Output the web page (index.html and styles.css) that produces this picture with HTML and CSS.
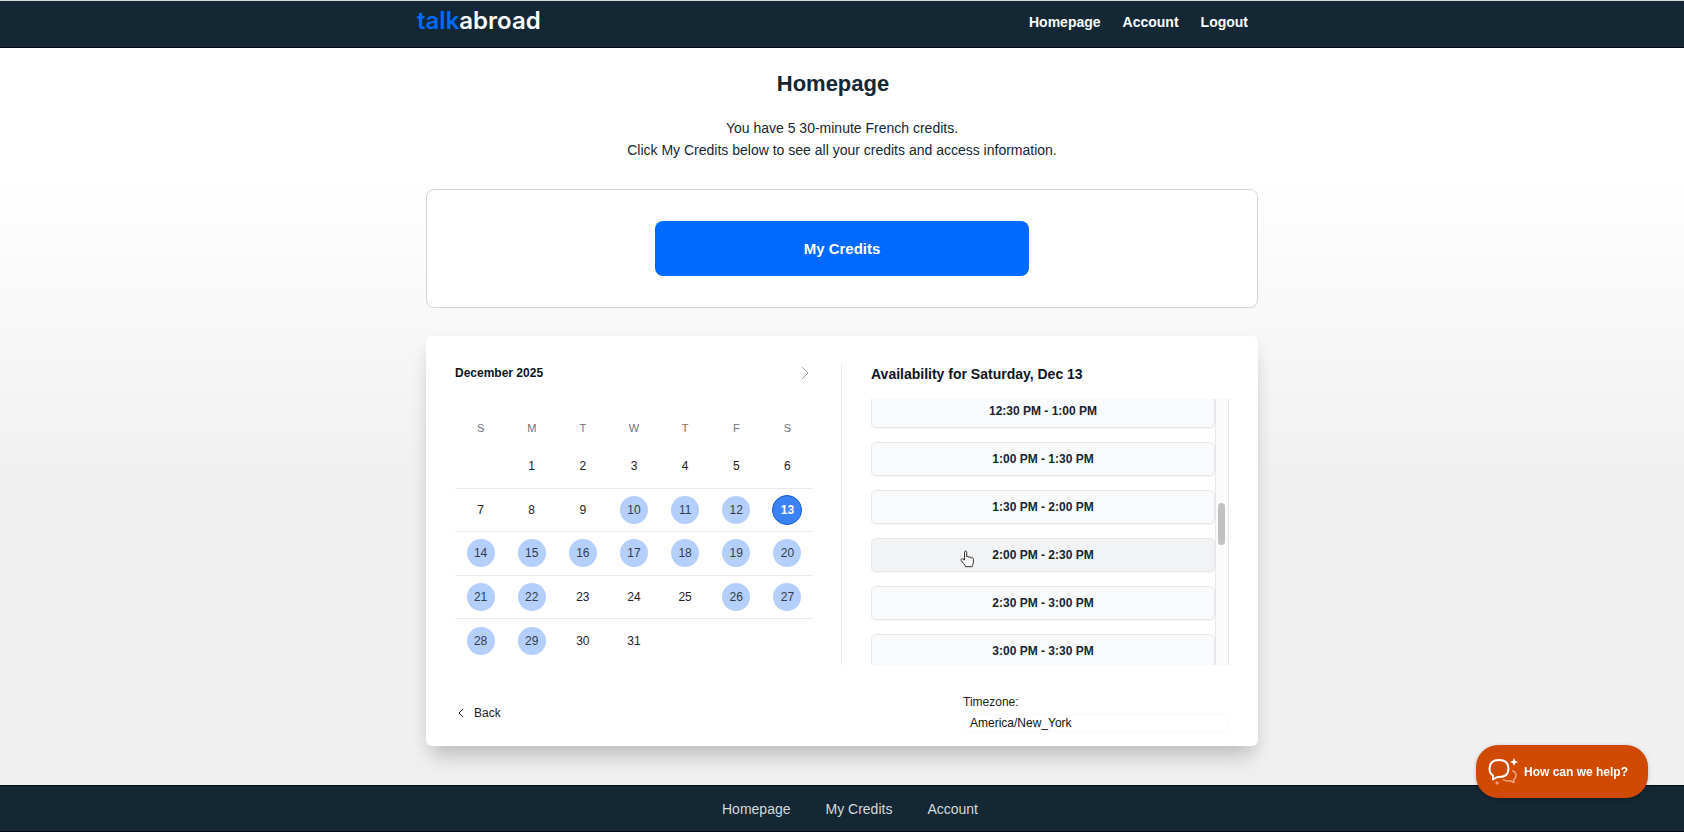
FILE: index.html
```html
<!DOCTYPE html>
<html lang="en">
<head>
    <meta charset="UTF-8">
    <meta name="viewport" content="width=device-width, initial-scale=1.0">
    <title>TalkAbroad - Homepage</title>
    <link rel="stylesheet" href="styles.css">
</head>
<body>
    <header class="site-header">
        <div class="header-inner">
            <a class="logo" href="#"><span>talk</span>abroad</a>
            <nav class="main-nav">
                <a href="#">Homepage</a>
                <a href="#">Account</a>
                <a href="#">Logout</a>
            </nav>
        </div>
    </header>

    <main>
        <h1>Homepage</h1>
        <p class="intro">You have 5 30-minute French credits.<br>Click My Credits below to see all your credits and access information.</p>

        <div class="credits-box">
            <button class="credits-btn">My Credits</button>
        </div>

        <section class="scheduler">
            <div class="panels">
                <div class="calendar">
                    <div class="month">
                        <h2>December 2025</h2>
                        <button class="next-btn" aria-label="Next month">
                            <svg width="8" height="14" viewBox="0 0 8 14"><path d="M1 1l6 6-6 6"/></svg>
                        </button>
                    </div>
                    <table>
                        <thead>
                            <tr><th>S</th><th>M</th><th>T</th><th>W</th><th>T</th><th>F</th><th>S</th></tr>
                        </thead>
                        <tbody id="days"></tbody>
                    </table>
                </div>
                <div class="availability">
                    <h2>Availability for Saturday, Dec 13</h2>
                    <div class="slots-wrap">
                        <div class="slots" id="slots">
                            <button class="slot">12:30 PM - 1:00 PM</button>
                            <button class="slot">1:00 PM - 1:30 PM</button>
                            <button class="slot">1:30 PM - 2:00 PM</button>
                            <button class="slot active">
                                2:00 PM - 2:30 PM
                                <svg class="pointer" width="15" height="18" viewBox="0 0 15 18"><path d="M4.500 10V2.200c0-1.600 2.200-1.600 2.200 0V7c.3-1 2.200-.9 2.300.5.500-.9 2.100-.6 2.200.7.600-.8 2.200-.4 2.200 1v3c0 1.500-1 2.300-1.200 4.500H5.500C5 14.500 2.500 12.500 1.200 10.500c-.8-1.300.8-2.300 1.800-1.500z"/></svg>
                            </button>
                            <button class="slot">2:30 PM - 3:00 PM</button>
                            <button class="slot">3:00 PM - 3:30 PM</button>
                        </div>
                        <div class="scrollbar"><div class="thumb"></div></div>
                    </div>
                </div>
            </div>

            <div class="card-footer">
                <button class="back-btn">
                    <svg width="6" height="10" viewBox="0 0 6 10"><path d="M5 1L1 5l4 4"/></svg>
                    Back
                </button>
                <div class="timezone">
                    <label for="timezone">Timezone:</label>
                    <select id="timezone">
                        <option>America/New_York</option>
                    </select>
                </div>
            </div>
        </section>
    </main>

    <footer class="site-footer">
        <nav>
            <a href="#">Homepage</a>
            <a href="#">My Credits</a>
            <a href="#">Account</a>
        </nav>
    </footer>

    <button class="help-btn">
        <svg width="30" height="28" viewBox="0 0 30 28">
            <path class="bubble" d="M5 21.500V17.500C2.500 16 1.500 13.500 1.500 10.500 1.500 5 4.500 2 11 2s9.500 3 9.500 8.500S17.500 19 11 19c-1 0-1.500 0-2 .2z"/>
            <path class="bubble-back" d="M24 12.500c3 1 4 3 4 5 0 1.800-.8 3-2.200 4v3l-2.800-1.700c-3 .5-6 .2-8-1.300"/>
            <path class="spark" d="M26 0l1.200 2.800L30 4l-2.800 1.200L26 8l-1.200-2.800L22 4l2.800-1.200z"/>
            <path class="spark small" d="M9 22.500l.8 1.700 1.700.8-1.700.8L9 27.500l-.8-1.700-1.700-.8 1.700-.8z"/>
        </svg>
        How can we help?
    </button>

    <script>
        const available = [10, 11, 12, 13, 14, 15, 16, 17, 18, 19, 20, 21, 22, 26, 27, 28, 29];
        const selected = 13;
        const firstWeekday = 1;
        const daysInMonth = 31;

        function renderDays() {
            let html = '';
            for (let week = 0; week < 5; week++) {
                html += '<tr>';
                for (let i = 0; i < 7; i++) {
                    const day = week * 7 + i - firstWeekday + 1;
                    if (day < 1 || day > daysInMonth) {
                        html += '<td></td>';
                        continue;
                    }
                    let cls = 'day';
                    if (available.includes(day)) cls += ' available';
                    if (day === selected) cls += ' selected';
                    html += `<td><button class="${cls}">${day}</button></td>`;
                }
                html += '</tr>';
            }
            document.getElementById('days').innerHTML = html;
        }

        renderDays();
        document.getElementById('slots').scrollTop = 5;
    </script>
</body>
</html>
```
FILE: styles.css
```css
* {
    box-sizing: border-box;
}
body {
    margin: 0;
    font-family: "Liberation Sans", Arial, sans-serif;
    font-size: 14px;
    color: #132734;
    background: linear-gradient(#fff 180px, #f0f0f0 480px);
}
a {
    text-decoration: none;
}
button {
    font-family: inherit;
    padding: 0;
    border: none;
    background: none;
    cursor: pointer;
}
svg path {
    fill: none;
    stroke: currentColor;
}
h1, h2, p {
    margin: 0;
}
.site-header {
    height: 48px;
    background: #132734;
    border-top: 1px solid #d5dcdc;
    border-bottom: 1px solid #020814;
}
.header-inner {
    display: flex;
    justify-content: space-between;
    max-width: 850px;
    margin: 0 auto;
    padding-right: 19px;
}
.logo {
    font-family: Inter, sans-serif;
    font-size: 24px;
    font-weight: 600;
    line-height: 40px;
    color: #fff;
}
.logo span {
    color: #006aff;
}
.main-nav {
    display: flex;
    gap: 22px;
    line-height: 42px;
    font-weight: bold;
}
.main-nav a {
    color: #fff;
}
main {
    max-width: 832px;
    margin: 0 auto;
    padding: 21px 0 39px;
}
h1 {
    padding-right: 18px;
    font-size: 22px;
    line-height: 30px;
    text-align: center;
}
.intro {
    margin-top: 18px;
    line-height: 22px;
    text-align: center;
}
.credits-box {
    margin-top: 28px;
    padding: 31px;
    border: 1px solid #d5d5d5;
    border-radius: 8px;
    background: #fff;
}
.credits-btn {
    display: block;
    width: 374px;
    max-width: 100%;
    height: 55px;
    margin: 0 auto;
    border-radius: 8px;
    background: #006aff;
    color: #fff;
    font-size: 15px;
    font-weight: bold;
}
.scheduler {
    margin-top: 28px;
    padding: 28px 29px 14px;
    border-radius: 6px;
    background: #fff;
    box-shadow: 0 16px 20px -6px rgba(0, 0, 0, 0.18), 0 6px 16px rgba(0, 0, 0, 0.05);
}
.panels {
    display: grid;
    grid-template-columns: 1fr 1fr;
}
.calendar {
    padding-right: 28px;
    border-right: 1px solid #e8eaed;
}
.month {
    display: flex;
    justify-content: space-between;
    align-items: center;
    height: 18px;
    padding-right: 4px;
}
.month h2 {
    font-size: 12px;
    color: #0b1526;
}
.next-btn {
    height: 14px;
    color: #9ca3af;
}
.next-btn svg {
    display: block;
}
table {
    width: 100%;
    height: 244px;
    margin-top: 36px;
    border-collapse: collapse;
    table-layout: fixed;
}
th {
    height: 27px;
    padding: 0 0 8px;
    font-size: 11px;
    font-weight: normal;
    color: #6b7280;
}
td {
    height: 43px;
    padding: 0;
    text-align: center;
}
tbody tr + tr {
    border-top: 1px solid #e8eaed;
}
.day {
    width: 28px;
    height: 28px;
    border-radius: 50%;
    font-size: 12px;
    color: #222;
}
.day.available {
    background: #b5cffc;
    color: #333c4d;
}
.day.selected {
    width: 30px;
    height: 30px;
    border: 1px solid #0f5bd0;
    background: #3b82f6;
    color: #fff;
    font-weight: bold;
}
.availability {
    padding-left: 29px;
}
.availability h2 {
    font-size: 14px;
    line-height: 20px;
    color: #0b1526;
}
.slots-wrap {
    display: flex;
    height: 266px;
    margin-top: 15px;
}
.slots {
    flex: 1;
    overflow-y: auto;
    scrollbar-width: none;
}
.scrollbar {
    width: 14px;
    padding: 104px 3px 0 2px;
    background: #fafafa;
    border-left: 1px solid #e8e8e8;
    border-right: 1px solid #e8e8e8;
}
.thumb {
    height: 42px;
    border-radius: 4px;
    background: #c1c1c1;
}
.slot {
    position: relative;
    display: block;
    width: 100%;
    height: 34px;
    margin-bottom: 14px;
    border: 1px solid #e5e7eb;
    border-radius: 5px;
    background: #f9fafb;
    box-shadow: 0 1px 2px rgba(0, 0, 0, 0.05);
    font-size: 12px;
    font-weight: bold;
    color: #1a2433;
}
.slot.active {
    background: #f2f3f5;
}
.pointer {
    position: absolute;
    top: 11px;
    left: 88px;
}
.pointer path {
    fill: #fff;
    stroke: #333;
}
.card-footer {
    display: flex;
    justify-content: space-between;
    align-items: center;
    margin-top: 29px;
    font-size: 12px;
    color: #222;
}
.back-btn {
    display: flex;
    align-items: center;
    gap: 10px;
    padding-left: 3px;
    font-size: 12px;
    color: #222;
}
.timezone {
    width: 266px;
}
.timezone label {
    display: block;
    line-height: 16px;
}
.timezone select {
    width: 100%;
    height: 18px;
    margin-top: 4px;
    padding: 0 6px;
    border: 1px solid #f8f8f8;
    border-radius: 5px;
    appearance: none;
    background: #fff;
    font-family: inherit;
    font-size: 12px;
    color: #111;
}
.site-footer {
    height: 47px;
    background: #132734;
    border-top: 1px solid #020814;
    border-bottom: 1px solid #020814;
}
.site-footer nav {
    display: flex;
    justify-content: center;
    gap: 35px;
    padding-left: 16px;
    line-height: 46px;
}
.site-footer a {
    color: #d5dadd;
}
.help-btn {
    position: fixed;
    right: 36px;
    bottom: 36px;
    display: flex;
    align-items: center;
    gap: 6px;
    width: 172px;
    height: 53px;
    padding-left: 12px;
    border-radius: 22px;
    background: #d04a02;
    color: #fff;
    font-size: 12px;
    font-weight: bold;
    box-shadow: 0 1px 4px rgba(0, 0, 0, 0.2);
}
.help-btn .bubble {
    stroke-width: 2;
    stroke-linejoin: round;
}
.help-btn .bubble-back {
    stroke: #eda583;
    stroke-width: 1.5;
}
.help-btn .spark {
    fill: #fff;
    stroke: none;
}
.help-btn .small {
    fill: #eda583;
}
```
